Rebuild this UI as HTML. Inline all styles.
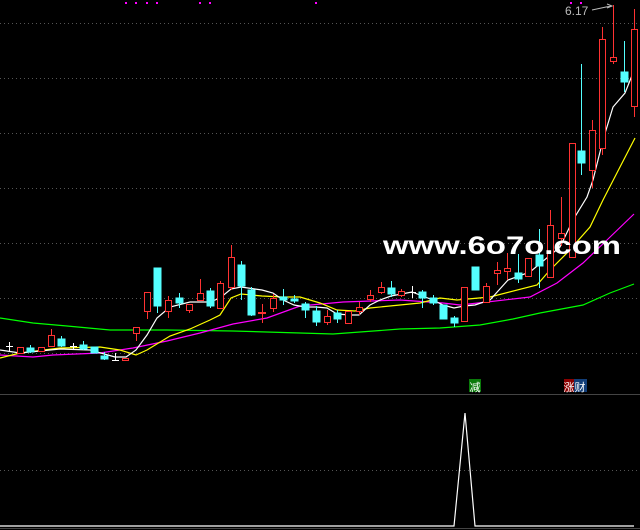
<!DOCTYPE html>
<html><head><meta charset="utf-8"><style>
html,body{margin:0;padding:0;background:#000;}
svg{display:block;}
</style></head><body>
<svg width="640" height="530" viewBox="0 0 640 530" xmlns="http://www.w3.org/2000/svg" shape-rendering="crispEdges">
<rect width="640" height="530" fill="#000"/>
<g stroke="#555" stroke-width="1" stroke-dasharray="1,3">
<line x1="0" y1="23.5" x2="640" y2="23.5"/>
<line x1="0" y1="78.5" x2="640" y2="78.5"/>
<line x1="0" y1="133.5" x2="640" y2="133.5"/>
<line x1="0" y1="188.5" x2="640" y2="188.5"/>
<line x1="0" y1="243.5" x2="640" y2="243.5"/>
<line x1="0" y1="298.5" x2="640" y2="298.5"/>
<line x1="0" y1="353.5" x2="640" y2="353.5"/>
<line x1="0" y1="470.5" x2="640" y2="470.5"/>
</g>
<g fill="#ff00ff">
<rect x="125" y="2" width="2" height="2"/><rect x="135" y="2" width="2" height="2"/><rect x="146" y="2" width="2" height="2"/><rect x="156" y="2" width="2" height="2"/><rect x="199" y="2" width="2" height="2"/><rect x="209" y="2" width="2" height="2"/><rect x="315" y="2" width="2" height="2"/><rect x="570" y="2" width="2" height="2"/><rect x="580" y="2" width="2" height="2"/>
</g>
<text x="565" y="15" font-family="Liberation Sans, sans-serif" font-size="12" fill="#bbb">6.17</text>
<polyline points="592,10 606,7 612,6" fill="none" stroke="#bbb" stroke-width="1" shape-rendering="auto"/>
<polyline points="607,4 612,6 607,8" fill="none" stroke="#bbb" stroke-width="1" shape-rendering="auto"/>

<g fill="none" stroke-width="1.2" shape-rendering="auto">
<polyline stroke="#00ff00" points="0,318 33,323 67,326 110,330 167,330 233,331 300,333 333,334 400,329 440,328 480,325 513,319 540,313 583,305 610,293 634,284"/>
<polyline stroke="#ff00ff" points="0,355 33,357 53,355 100,353 133,348 167,341 200,333 233,324 267,318 300,306 343,302 400,300 443,303 460,305 487,302 530,297 557,283 583,263 607,240 634,214"/>
<polyline stroke="#ffff00" points="0,358 20,353 60,348 100,347 120,350 136,355 147,350 170,336 190,329 210,320 220,315 231,298 241,294 262,296 283,297 300,297 320,303 337,310 355,311 370,308 400,305 420,303 440,298 457,300 490,297 537,285 550,270 567,253 590,227 603,200 620,167 635,138"/>
<polyline stroke="#ffffff" points="0,350 20,353 40,351 60,349 90,350 115,357 126,357 136,350 147,335 157,318 170,307 190,302 210,302 220,298 231,289 241,287 262,290 273,293 283,300 294,305 305,307 316,307 327,308 337,314 350,315 359,315 370,305 380,300 391,296 412,292 433,300 443,305 454,308 464,306 475,305 490,300 508,280 530,272 560,247 573,220 587,197 593,180 603,140 613,107 625,93 635,68"/>
</g>

<g stroke-width="1">
<g stroke="#fff">
<line x1="9.5" y1="342" x2="9.5" y2="352"/><line x1="6" y1="346.5" x2="13" y2="346.5"/>
<line x1="73.5" y1="343" x2="73.5" y2="350"/><line x1="70" y1="346.5" x2="77" y2="346.5"/>
<line x1="115.5" y1="353" x2="115.5" y2="361"/><line x1="112" y1="360.5" x2="119" y2="360.5"/>
<line x1="412.5" y1="286" x2="412.5" y2="298"/><line x1="409" y1="292.5" x2="416" y2="292.5"/>
</g>
<g fill="#54ffff" stroke="#54ffff">
<line x1="61.5" y1="336" x2="61.5" y2="347"/><rect x="58" y="339" width="7" height="7"/>
<line x1="83.5" y1="341" x2="83.5" y2="350"/><rect x="80" y="345" width="7" height="4"/>
<line x1="30.5" y1="345" x2="30.5" y2="353"/><rect x="27" y="348" width="7" height="4"/>
<rect x="91" y="347" width="7" height="6"/>
<line x1="104.5" y1="352" x2="104.5" y2="360"/><rect x="101" y="356" width="7" height="3"/>
<line x1="157.5" y1="268" x2="157.5" y2="313"/><rect x="154" y="268" width="7" height="38"/>
<line x1="179.5" y1="293" x2="179.5" y2="308"/><rect x="176" y="298" width="7" height="5"/>
<line x1="210.5" y1="288" x2="210.5" y2="308"/><rect x="207" y="291" width="7" height="15"/>
<line x1="241.5" y1="261" x2="241.5" y2="300"/><rect x="238" y="265" width="7" height="21"/>
<line x1="251.5" y1="287" x2="251.5" y2="316"/><rect x="248" y="290" width="7" height="25"/>
<line x1="283.5" y1="289" x2="283.5" y2="305"/><rect x="280" y="297" width="7" height="3"/>
<line x1="294.5" y1="295" x2="294.5" y2="303"/><rect x="291" y="299" width="7" height="2"/>
<line x1="305.5" y1="302" x2="305.5" y2="318"/><rect x="302" y="304" width="7" height="6"/>
<line x1="316.5" y1="306" x2="316.5" y2="326"/><rect x="313" y="311" width="7" height="11"/>
<line x1="337.5" y1="310" x2="337.5" y2="323"/><rect x="334" y="313" width="7" height="6"/>
<line x1="391.5" y1="281" x2="391.5" y2="297"/><rect x="388" y="288" width="7" height="6"/>
<line x1="422.5" y1="290" x2="422.5" y2="308"/><rect x="419" y="292" width="7" height="6"/>
<line x1="433.5" y1="295" x2="433.5" y2="305"/><rect x="430" y="298" width="7" height="5"/>
<rect x="440" y="305" width="7" height="14"/>
<line x1="454.5" y1="316" x2="454.5" y2="327"/><rect x="451" y="318" width="7" height="5"/>
<rect x="472" y="267" width="7" height="23"/>
<line x1="518.5" y1="254" x2="518.5" y2="283"/><rect x="515" y="273" width="7" height="6"/>
<line x1="539.5" y1="229" x2="539.5" y2="288"/><rect x="536" y="255" width="7" height="11"/>
<line x1="581.5" y1="64" x2="581.5" y2="175"/><rect x="578" y="151" width="7" height="12"/>
<line x1="624.5" y1="41" x2="624.5" y2="92"/><rect x="621" y="72" width="7" height="10"/>
</g>
<!-- red wicks -->
<g stroke="#ff3232">
<line x1="51.5" y1="329" x2="51.5" y2="335"/>
<line x1="136.5" y1="333" x2="136.5" y2="341"/>
<line x1="147.5" y1="312" x2="147.5" y2="319"/>
<line x1="168.5" y1="296" x2="168.5" y2="318"/>
<line x1="189.5" y1="310" x2="189.5" y2="313"/>
<line x1="200.5" y1="279" x2="200.5" y2="293"/>
<line x1="220.5" y1="281" x2="220.5" y2="283"/>
<line x1="231.5" y1="245" x2="231.5" y2="290"/>
<line x1="262.5" y1="304" x2="262.5" y2="323"/>
<line x1="273.5" y1="294" x2="273.5" y2="312"/>
<line x1="327.5" y1="310" x2="327.5" y2="325"/>
<line x1="359.5" y1="302" x2="359.5" y2="315"/>
<line x1="370.5" y1="290" x2="370.5" y2="302"/>
<line x1="381.5" y1="282" x2="381.5" y2="294"/>
<line x1="401.5" y1="289" x2="401.5" y2="297"/>
<line x1="486.5" y1="283" x2="486.5" y2="286"/>
<line x1="497.5" y1="262" x2="497.5" y2="285"/>
<line x1="507.5" y1="253" x2="507.5" y2="280"/>
<line x1="550.5" y1="210" x2="550.5" y2="225"/>
<line x1="561.5" y1="197" x2="561.5" y2="246"/>
<line x1="592.5" y1="120" x2="592.5" y2="188"/>
<line x1="602.5" y1="27" x2="602.5" y2="155"/>
<line x1="613.5" y1="5" x2="613.5" y2="64"/>
<line x1="634.5" y1="9" x2="634.5" y2="117"/>
</g>
<!-- red bodies (outer) -->
<g fill="#ff3232">
<rect x="17" y="347" width="7" height="7"/>
<rect x="38" y="347" width="7" height="5"/>
<rect x="48" y="335" width="7" height="12"/>
<rect x="122" y="358" width="7" height="3"/>
<rect x="133" y="327" width="7" height="7"/>
<rect x="144" y="292" width="7" height="20"/>
<rect x="165" y="300" width="7" height="12"/>
<rect x="186" y="304" width="7" height="7"/>
<rect x="197" y="293" width="7" height="8"/>
<rect x="217" y="283" width="7" height="26"/>
<rect x="228" y="257" width="7" height="31"/>
<rect x="258" y="312" width="8" height="2"/>
<rect x="270" y="298" width="7" height="11"/>
<rect x="324" y="316" width="7" height="7"/>
<rect x="345" y="311" width="7" height="13"/>
<rect x="356" y="307" width="7" height="5"/>
<rect x="367" y="295" width="7" height="5"/>
<rect x="378" y="287" width="7" height="6"/>
<rect x="398" y="291" width="7" height="5"/>
<rect x="461" y="287" width="7" height="35"/>
<rect x="483" y="286" width="7" height="17"/>
<rect x="494" y="270" width="7" height="4"/>
<rect x="504" y="268" width="7" height="4"/>
<rect x="525" y="258" width="7" height="19"/>
<rect x="547" y="225" width="7" height="53"/>
<rect x="558" y="233" width="7" height="6"/>
<rect x="569" y="143" width="7" height="115"/>
<rect x="589" y="130" width="7" height="41"/>
<rect x="599" y="39" width="7" height="110"/>
<rect x="610" y="57" width="7" height="5"/>
<rect x="631" y="29" width="7" height="78"/>
</g>
<g fill="#000">
<rect x="18" y="348" width="5" height="5"/>
<rect x="39" y="348" width="5" height="3"/>
<rect x="49" y="336" width="5" height="10"/>
<rect x="123" y="359" width="5" height="1"/>
<rect x="134" y="328" width="5" height="5"/>
<rect x="145" y="293" width="5" height="18"/>
<rect x="166" y="301" width="5" height="10"/>
<rect x="187" y="305" width="5" height="5"/>
<rect x="198" y="294" width="5" height="6"/>
<rect x="218" y="284" width="5" height="24"/>
<rect x="229" y="258" width="5" height="29"/>
<rect x="271" y="299" width="5" height="9"/>
<rect x="325" y="317" width="5" height="5"/>
<rect x="346" y="312" width="5" height="11"/>
<rect x="357" y="308" width="5" height="3"/>
<rect x="368" y="296" width="5" height="3"/>
<rect x="379" y="288" width="5" height="4"/>
<rect x="399" y="292" width="5" height="3"/>
<rect x="462" y="288" width="5" height="33"/>
<rect x="484" y="287" width="5" height="15"/>
<rect x="495" y="271" width="5" height="2"/>
<rect x="505" y="269" width="5" height="2"/>
<rect x="526" y="259" width="5" height="17"/>
<rect x="548" y="226" width="5" height="51"/>
<rect x="559" y="234" width="5" height="4"/>
<rect x="570" y="144" width="5" height="113"/>
<rect x="590" y="131" width="5" height="39"/>
<rect x="600" y="40" width="5" height="108"/>
<rect x="611" y="58" width="5" height="3"/>
<rect x="632" y="30" width="5" height="76"/>
</g>
</g>

<text x="383" y="254" font-family="Liberation Sans, sans-serif" font-weight="bold" font-size="25" fill="#fff" textLength="238" lengthAdjust="spacingAndGlyphs">www.6o7o.com</text>

<line x1="0" y1="394.5" x2="640" y2="394.5" stroke="#444"/>
<line x1="0" y1="528.5" x2="640" y2="528.5" stroke="#444"/>
<rect x="469" y="379" width="12" height="13" fill="#0a7a0a"/>
<text x="469.5" y="391" font-family="Noto Sans CJK SC, sans-serif" font-size="11" fill="#fff">减</text>
<rect x="564" y="379" width="10" height="13" fill="#8b0000"/>
<rect x="574" y="379" width="13" height="13" fill="#123e78"/>
<text x="563.5" y="391" font-family="Noto Sans CJK SC, sans-serif" font-size="11" fill="#fff">涨财</text>
<polyline points="0,526 454,526 465,413 475,526 634,526" fill="none" stroke="#fff" stroke-width="1.2" shape-rendering="auto"/>
</svg>
</body></html>
